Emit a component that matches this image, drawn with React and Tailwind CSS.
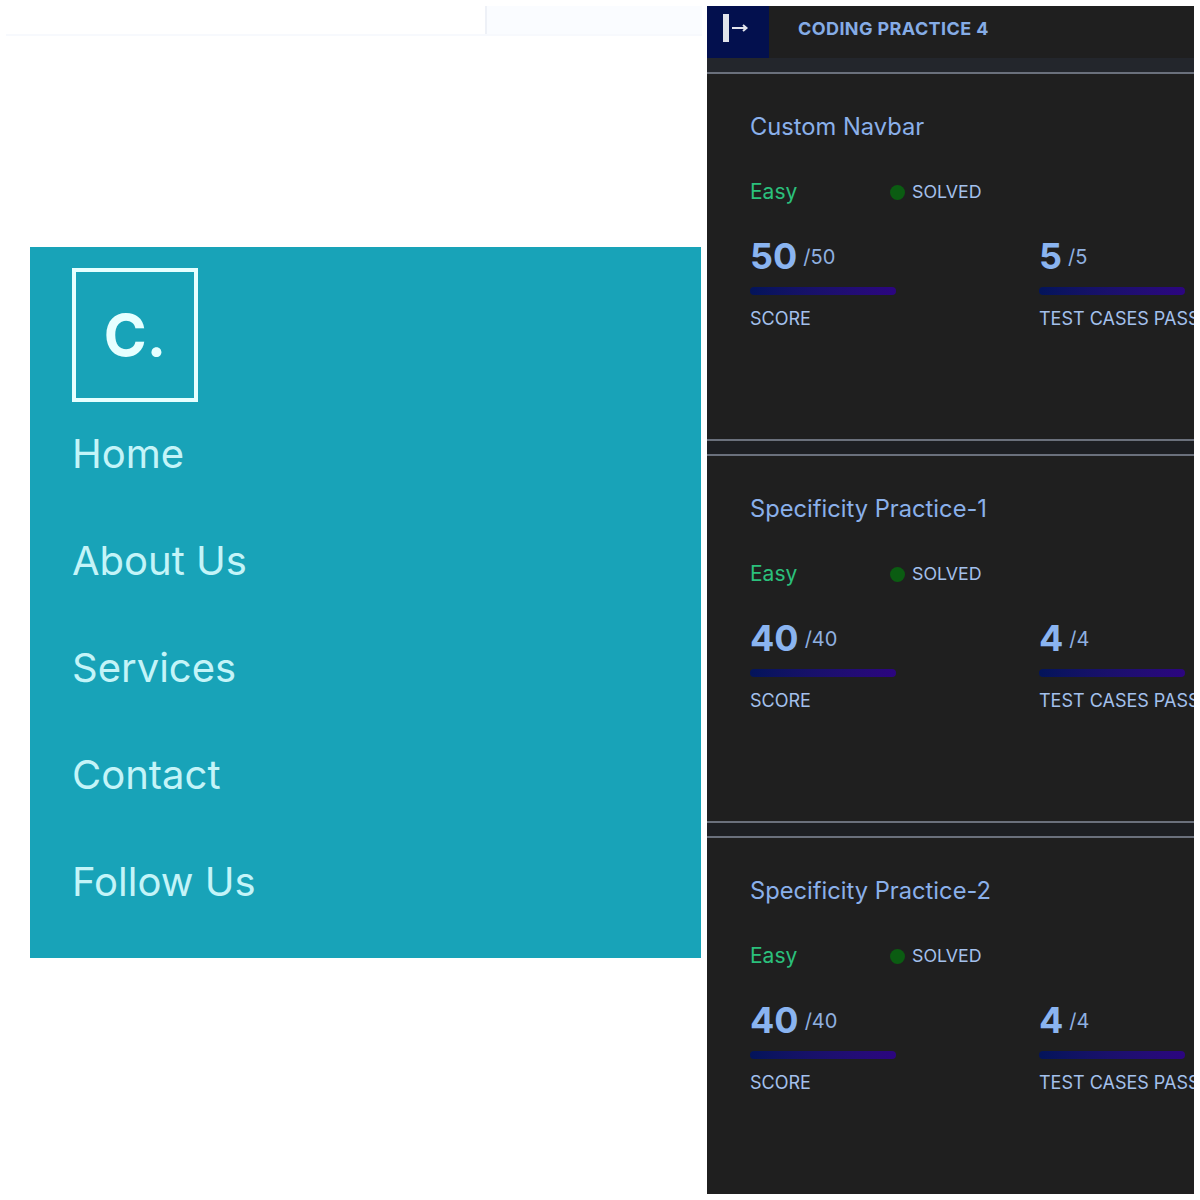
const navLinks = ["Home", "About Us", "Services", "Contact", "Follow Us"];

const practices = [
  { title: "Custom Navbar", score: 50, cases: 5 },
  { title: "Specificity Practice-1", score: 40, cases: 4 },
  { title: "Specificity Practice-2", score: 40, cases: 4 },
];

function Stat({ value, total, label }) {
  return (
    <div className="w-[146px] shrink-0">
      <div className="flex h-[36px] items-center">
        <span className="text-[36px] leading-[36px] font-bold text-[#8ab4f0]">{value}</span>
        <span className="mt-[2px] ml-[6px] text-[20px] leading-[36px] text-[#8fb0e0]">/{total}</span>
      </div>
      <div className="mt-[13px] h-[8px] w-[146px] rounded-full bg-gradient-to-r from-[#03145a] to-[#2c0580]" />
      <p className="mt-[12px] text-[18px] leading-[24px] whitespace-nowrap text-[#a3c0ec]">{label}</p>
    </div>
  );
}

function PracticeCard({ practice }) {
  return (
    <div className="h-[365px] px-[43px] pt-[36px]">
      <h2 className="text-[23.700px] leading-[34px] text-[#8ab0ea]">{practice.title}</h2>
      <div className="mt-[32px] flex h-[32px] items-center">
        <span className="w-[140px] text-[21px] text-[#2bc07c]">Easy</span>
        <span className="h-[15px] w-[15px] rounded-full bg-[#0b5c12]" />
        <span className="ml-[7px] text-[17.800px] text-[#a3c0ec]">SOLVED</span>
      </div>
      <div className="mt-[30px] flex gap-[143px]">
        <Stat value={practice.score} total={practice.score} label="SCORE" />
        <Stat value={practice.cases} total={practice.cases} label="TEST CASES PASSED" />
      </div>
    </div>
  );
}

export default function App() {
  return (
    <div className="flex h-[1200px] w-[1200px] overflow-hidden bg-white font-['Inter',sans-serif]">
      <div className="w-[707px] shrink-0 pt-[6px]">
        <div className="ml-[6px] flex h-[30px] w-[696px] justify-end border-b-2 border-[#f7f9fd]">
          <div className="h-full w-[217px] border-l-2 border-[#eef1f7] bg-[#fafcff]" />
        </div>
        <div className="mt-[211px] ml-[30px] h-[711px] w-[671px] bg-[#18a3b8] pt-[21px] pl-[42px]">
          <div className="flex h-[134px] w-[126px] items-center justify-center border-[4px] border-[#e6ffff]">
            <span className="text-[58px] leading-none font-bold text-[#e6ffff]">C.</span>
          </div>
          <ul className="mt-[28px] flex flex-col gap-[59px]">
            {navLinks.map((link) => (
              <li key={link} className="text-[40px] leading-[48px] text-[#c4f4f8]">{link}</li>
            ))}
          </ul>
        </div>
      </div>

      <div className="my-[6px] h-[1188px] w-[487px] shrink-0 overflow-hidden bg-[#1f1f1f]">
        <div className="flex h-[52px] items-start">
          <div className="flex h-full w-[62px] items-start bg-[#03104e] pt-[8px] pl-[16px]">
            <svg width="26" height="28" viewBox="0 0 26 28" fill="none">
              <rect x="0" y="0" width="6" height="28" fill="#e2e4ec" />
              <path d="M9 14h14M20 11l3.500 3-3.500 3" stroke="#e2e4ec" strokeWidth="2" />
            </svg>
          </div>
          <h1 className="mt-[11px] ml-[29px] text-[18px] leading-[24px] font-bold tracking-[0.4px] text-[#85ace6]">CODING PRACTICE 4</h1>
        </div>
        <div className="h-[14px] bg-[#23262c]" />
        {practices.map((practice) => (
          <div key={practice.title}>
            <div className="border-y-2 border-[#6a707c] bg-[#1f1f1f]">
              <PracticeCard practice={practice} />
            </div>
            <div className="h-[13px] bg-[#1d1f23]" />
          </div>
        ))}
      </div>
    </div>
  );
}
